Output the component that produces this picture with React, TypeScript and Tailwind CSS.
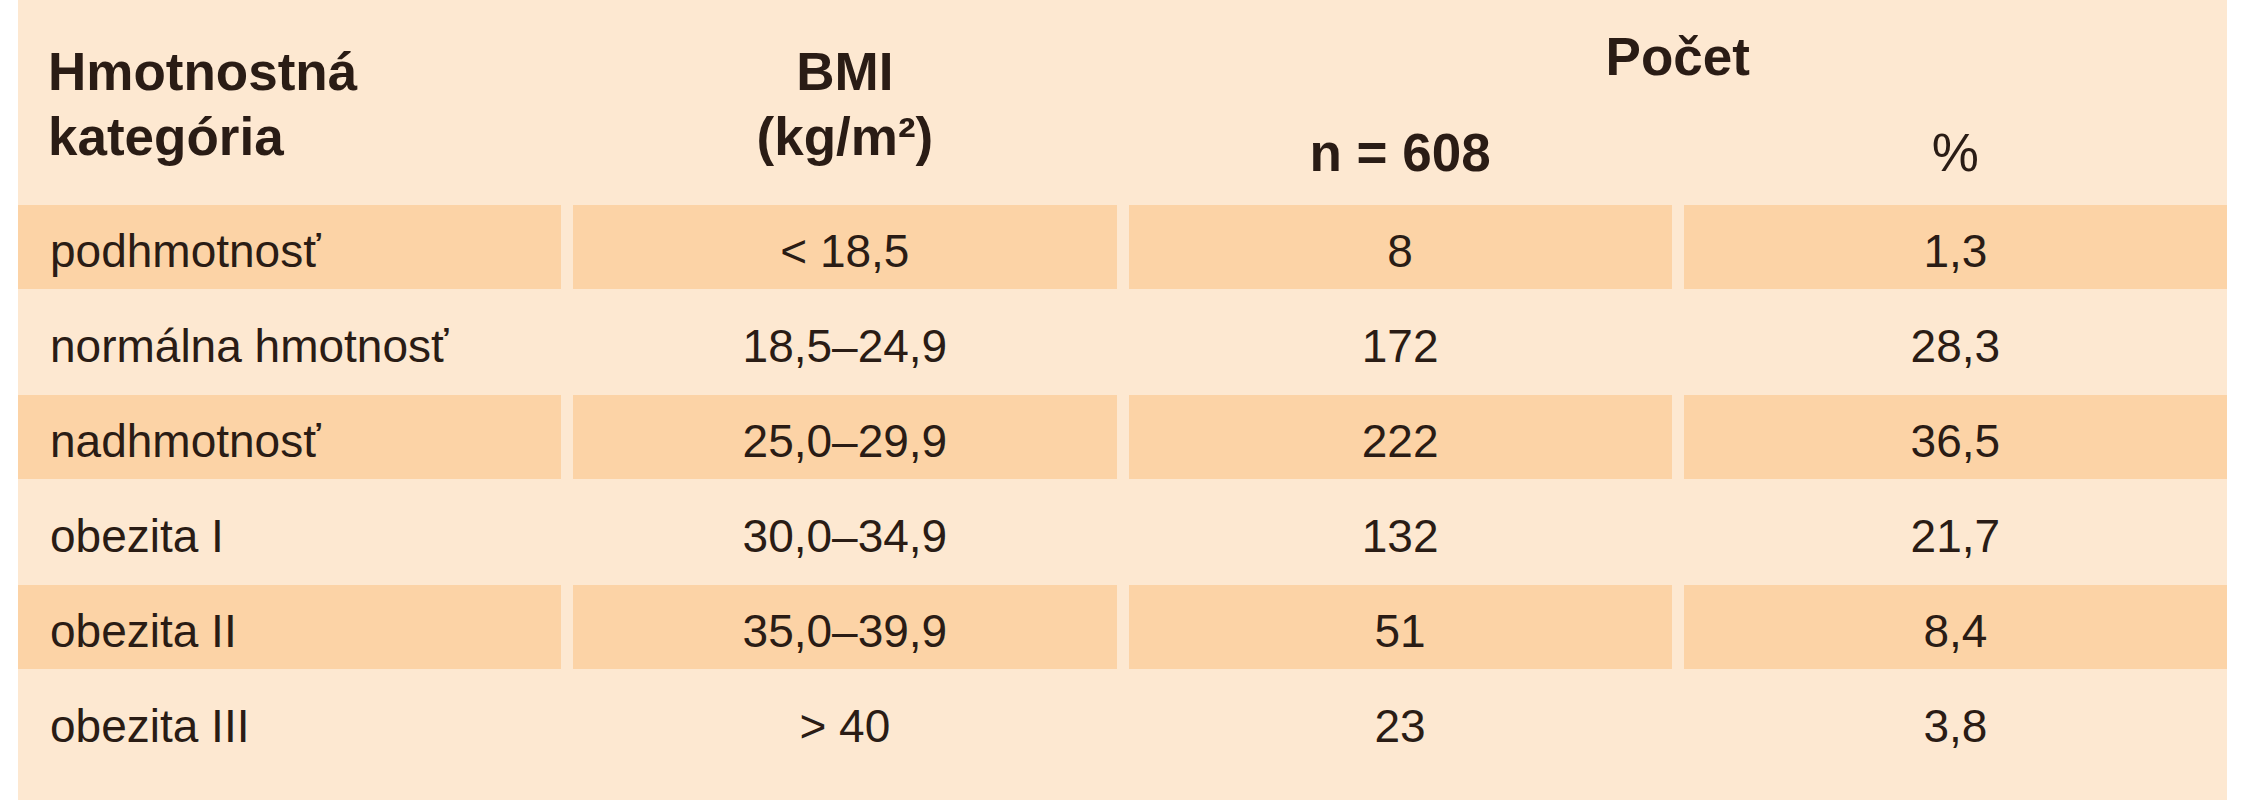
import React from "react";

const rows: [string, string, string, string][] = [
  ["podhmotnosť", "< 18,5", "8", "1,3"],
  ["normálna hmotnosť", "18,5–24,9", "172", "28,3"],
  ["nadhmotnosť", "25,0–29,9", "222", "36,5"],
  ["obezita I", "30,0–34,9", "132", "21,7"],
  ["obezita II", "35,0–39,9", "51", "8,4"],
  ["obezita III", "> 40", "23", "3,8"],
];

export default function App() {
  return (
    <div
      className="w-[2267px] h-[800px] bg-white overflow-hidden"
      style={{ fontFamily: '"Liberation Sans", Arial, sans-serif' }}
    >
      <div className="ml-[18px] w-[2209px] h-[800px] bg-[#fde8d1] text-[#2a1c15] flex flex-col gap-y-[11px] pb-[36px]">
        {/* header */}
        <div className="grid grid-cols-4 gap-x-[12px] h-[194px] font-bold text-[53px] leading-[65px]">
          <div className="pt-[39px] pl-[30px]">
            <div>Hmotnostná</div>
            <div>kategória</div>
          </div>
          <div className="pt-[39px] text-center">
            <div>BMI</div>
            <div>(kg/m²)</div>
          </div>
          <div className="col-span-2 flex flex-col pt-[24px]">
            <div className="text-center">Počet</div>
            <div className="grid grid-cols-2 gap-x-[12px] mt-[31px]">
              <div className="text-center">n = 608</div>
              <div className="text-center font-normal">%</div>
            </div>
          </div>
        </div>
        {rows.map((r, i) => {
          const shaded = i % 2 === 0;
          const cell = `h-[84px] flex items-center pt-[9px] ${shaded ? "bg-[#fcd3a6]" : ""}`;
          return (
            <div key={i} className="grid grid-cols-4 gap-x-[12px] text-[46px]">
              <div className={`${cell} pl-[32px]`}>{r[0]}</div>
              <div className={`${cell} justify-center`}>{r[1]}</div>
              <div className={`${cell} justify-center`}>{r[2]}</div>
              <div className={`${cell} justify-center`}>{r[3]}</div>
            </div>
          );
        })}
      </div>
    </div>
  );
}
